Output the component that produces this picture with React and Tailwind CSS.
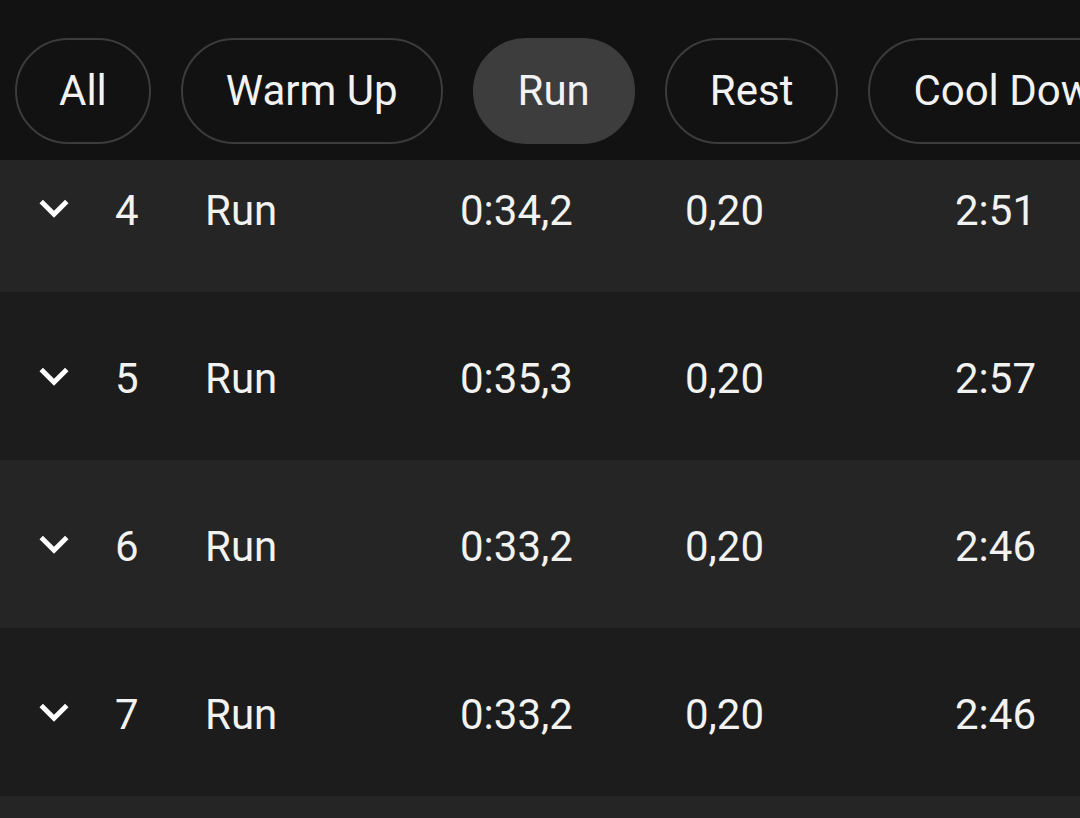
import React from "react";

const pills = [
  { label: "All", active: false },
  { label: "Warm Up", active: false },
  { label: "Run", active: true },
  { label: "Rest", active: false },
  { label: "Cool Down", active: false },
];

const rows = [
  { n: 4, type: "Run", time: "0:34,2", dist: "0,20", pace: "2:51" },
  { n: 5, type: "Run", time: "0:35,3", dist: "0,20", pace: "2:57" },
  { n: 6, type: "Run", time: "0:33,2", dist: "0,20", pace: "2:46" },
  { n: 7, type: "Run", time: "0:33,2", dist: "0,20", pace: "2:46" },
];

function Chevron() {
  return (
    <svg width="58" height="58" viewBox="0 0 24 24" fill="#ffffff">
      <path d="M16.59 8.59L12 13.17 7.41 8.59 6 10l6 6 6-6z" />
    </svg>
  );
}

export default function App() {
  return (
    <div
      className="w-[1080px] h-[818px] overflow-hidden bg-[#121212] text-[#f2f2f2]"
      style={{ fontFamily: "Roboto, 'Noto Sans', sans-serif" }}
    >
      <div className="h-[160px] bg-[#121212] pt-[38px] pl-[15px] flex gap-[30px] overflow-hidden whitespace-nowrap">
        {pills.map((p, i) => (
          <div
            key={p.label}
            className={
              "h-[106px] shrink-0 rounded-full border-2 flex items-center text-[42px] leading-none " +
              (i === 0 ? "px-[42px] " : "px-[43px] ") +
              (p.active
                ? "bg-[#3d3d3d] border-[#3d3d3d]"
                : "border-[#3c3c3c]")
            }
          >
            {p.label}
          </div>
        ))}
      </div>
      <div className="h-[658px] overflow-hidden">
        {rows.map((r, i) => (
          <div
            key={r.n}
            className={
              "h-[168px] flex items-center pt-[6px] text-[42px] leading-none " +
              (i % 2 === 0 ? "bg-[#252525]" : "bg-[#1c1c1c]") +
              (i === 0 ? " -mt-[36px]" : "")
            }
          >
            <div className="w-[115px] pl-[25px] -mt-[6px] flex items-center">
              <Chevron />
            </div>
            <div className="w-[90px]">{r.n}</div>
            <div className="w-[255px]">{r.type}</div>
            <div className="w-[225px]">{r.time}</div>
            <div className="w-[270px]">{r.dist}</div>
            <div>{r.pace}</div>
          </div>
        ))}
        <div className="h-[168px] bg-[#252525]" />
      </div>
    </div>
  );
}
